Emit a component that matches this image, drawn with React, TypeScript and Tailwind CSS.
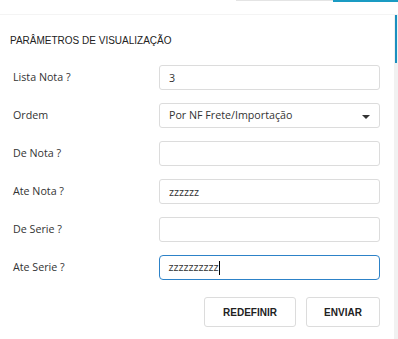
import { useState } from 'react';

const fields = [
  { label: 'Lista Nota ?', value: '3' },
  { label: 'Ordem', value: 'Por NF Frete/Importação', select: true },
  { label: 'De Nota ?', value: '' },
  { label: 'Ate Nota ?', value: 'zzzzzz' },
  { label: 'De Serie ?', value: '' },
];

export default function App() {
  const [values, setValues] = useState(fields.map((f) => f.value));

  return (
    <div className="w-[398px] h-[339px] bg-white overflow-hidden flex flex-col font-['Open_Sans',sans-serif] text-[#333]">
      {/* tab remnants */}
      <div className="h-[15px] flex items-start border-b border-[#f4f4f4]">
        <div className="ml-[236px] w-[97px] h-px bg-[#e4e4e4]" />
        <div className="flex-1 h-[2px] bg-[#1a9bc3]" />
      </div>

      <div className="flex flex-1">
        <div className="flex-1 pt-[20px] pl-[10px] pr-[14px]">
          <h2 className="font-['Liberation_Sans',Arial,sans-serif] text-[10px] leading-[12px] uppercase text-[#222]">
            Parâmetros de Visualização
          </h2>

          <div className="mt-[18px] flex flex-col gap-[13px]">
            {fields.map((f, i) => (
              <div key={f.label} className="flex items-center">
                <label className="w-[149px] pl-[3px] text-[10.7px]">{f.label}</label>
                {f.select ? (
                  <div className="relative flex-1 h-[25px] border border-[#dcdcdc] rounded-[3px] flex items-center px-[9px] text-[10.7px]">
                    {f.value}
                    <span className="absolute right-[9px] top-[11px] w-0 h-0 border-l-[4px] border-r-[4px] border-t-[4px] border-l-transparent border-r-transparent border-t-[#333]" />
                  </div>
                ) : (
                  <input
                    value={values[i]}
                    onChange={(e) => setValues(values.map((v, j) => (j === i ? e.target.value : v)))}
                    className="flex-1 min-w-0 h-[25px] border border-[#dcdcdc] rounded-[3px] px-[9px] text-[10.7px] outline-none"
                  />
                )}
              </div>
            ))}
            <div className="flex items-center">
              <label className="w-[149px] pl-[3px] text-[10.7px]">Ate Serie ?</label>
              <div className="flex-1 h-[25px] border-[1.5px] border-[#2d82c8] rounded-[4px] px-[8.5px] text-[10.7px] flex items-center">
                zzzzzzzzzz
                <span className="w-px h-[14px] bg-black" />
              </div>
            </div>
          </div>

          <div className="mt-[17px] flex justify-end gap-[10px] font-['Liberation_Sans',Arial,sans-serif] text-[10px] font-bold text-[#222]">
            <button className="w-[92px] h-[30px] border border-[#dcdcdc] rounded-[3px] bg-white">REDEFINIR</button>
            <button className="w-[74px] h-[30px] border border-[#dcdcdc] rounded-[3px] bg-white">ENVIAR</button>
          </div>
        </div>

        {/* scrollbar */}
        <div className="w-[4px] bg-[#f1f1f1] flex flex-col">
          <div className="ml-[1px] w-[2px] h-[48px] bg-[#1a8fbf]" />
        </div>
      </div>
    </div>
  );
}
